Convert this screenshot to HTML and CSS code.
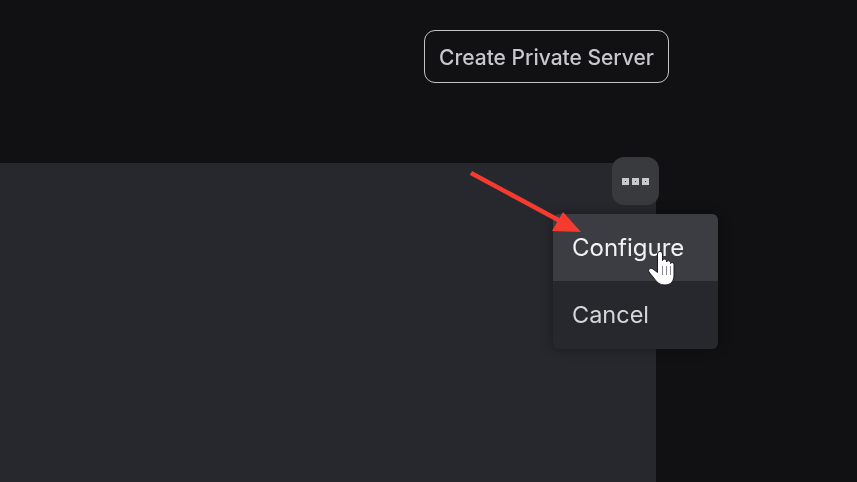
FILE: index.html
```html
<!DOCTYPE html>
<html lang="en">
<head>
<meta charset="utf-8">
<title>Private Server</title>
<link rel="stylesheet" href="styles.css">
</head>
<body>
<header class="top">
  <button class="create">Create Private Server</button>
</header>
<main class="panel"></main>
<div class="more"><span class="dot"></span><span class="dot"></span><span class="dot"></span></div>
<nav class="menu">
  <div class="item hover">Configure</div>
  <div class="item">Cancel</div>
</nav>
<svg class="arrow" width="120" height="70" viewBox="470 170 120 70">
  <path d="M471 173 L562 222" stroke="#f53b30" stroke-width="4.5" fill="none"/>
  <path d="M563 212 L581 232 L552 231 Z" fill="#f53b30"/>
</svg>
<svg class="hand" width="30" height="36" viewBox="646 250 30 36">
  <path d="M657.500 254 C657.500 250.500 662.500 250.500 662.500 254 V260.500 C663.500 258.500 666 258.500 666.500 261 V262 C667.500 260 670 260.500 670.500 262.500 V263.500 C671.500 262 674 262.500 674 264.500 V275 C674 281 671 285 665 285 C660 285 657.500 283 655 279.500 L649 272 C647.500 269.500 650.500 267 653 269 L657.500 272.500 Z" fill="#fff" stroke="#1a1a1c" stroke-width="1"/>
  <path d="M662.500 266 V275 M666.500 266 V275 M670.500 266 V275" stroke="#8a8a8e" stroke-width="1"/>
</svg>
</body>
</html>
```
FILE: styles.css
```css
* { box-sizing: border-box; }
html, body { margin: 0; height: 100%; }
body {
  width: 857px;
  height: 482px;
  overflow: hidden;
  position: relative;
  background: #111113;
  font-family: Inter, "Noto Sans", sans-serif;
}
.top {
  height: 163px;
  padding: 30px 0 0 424px;
}
.create {
  display: block;
  width: 245px;
  height: 53px;
  padding: 2px 0 0;
  border: 1.5px solid #c4c4c6;
  border-radius: 11px;
  background: #111113;
  color: #c8c8cc;
  font: 500 21px Inter, "Noto Sans", sans-serif;
  filter: blur(0.3px);
}
.panel {
  width: 656px;
  height: 319px;
  background: #27282d;
}
.more {
  position: absolute;
  left: 612px;
  top: 157px;
  width: 47px;
  height: 48px;
  padding-top: 1px;
  border-radius: 12px;
  background: #393a3e;
  display: flex;
  align-items: center;
  justify-content: center;
  gap: 3px;
  filter: blur(0.3px);
}
.dot {
  width: 7px;
  height: 7px;
  background: #c9c9cc;
  position: relative;
}
.dot::after {
  content: "";
  position: absolute;
  inset: 3px;
  background: #333;
}
.menu {
  position: absolute;
  left: 553px;
  top: 214px;
  width: 165px;
  height: 135px;
  border-radius: 6px;
  overflow: hidden;
  background: #27282d;
  box-shadow: 0 0 12px rgba(0, 0, 0, 0.35);
  display: flex;
  flex-direction: column;
}
.item {
  flex: 1;
  padding: 0 0 2px 19px;
  display: flex;
  align-items: center;
  color: #d6d6d9;
  font-size: 23.500px;
  filter: blur(0.3px);
}
.hover {
  flex: none;
  height: 67px;
  padding-bottom: 0;
  background: #3c3d42;
  color: #f2f2f4;
  font-size: 24px;
}
.arrow {
  position: absolute;
  left: 470px;
  top: 170px;
}
.hand {
  position: absolute;
  left: 646px;
  top: 250px;
}
```
